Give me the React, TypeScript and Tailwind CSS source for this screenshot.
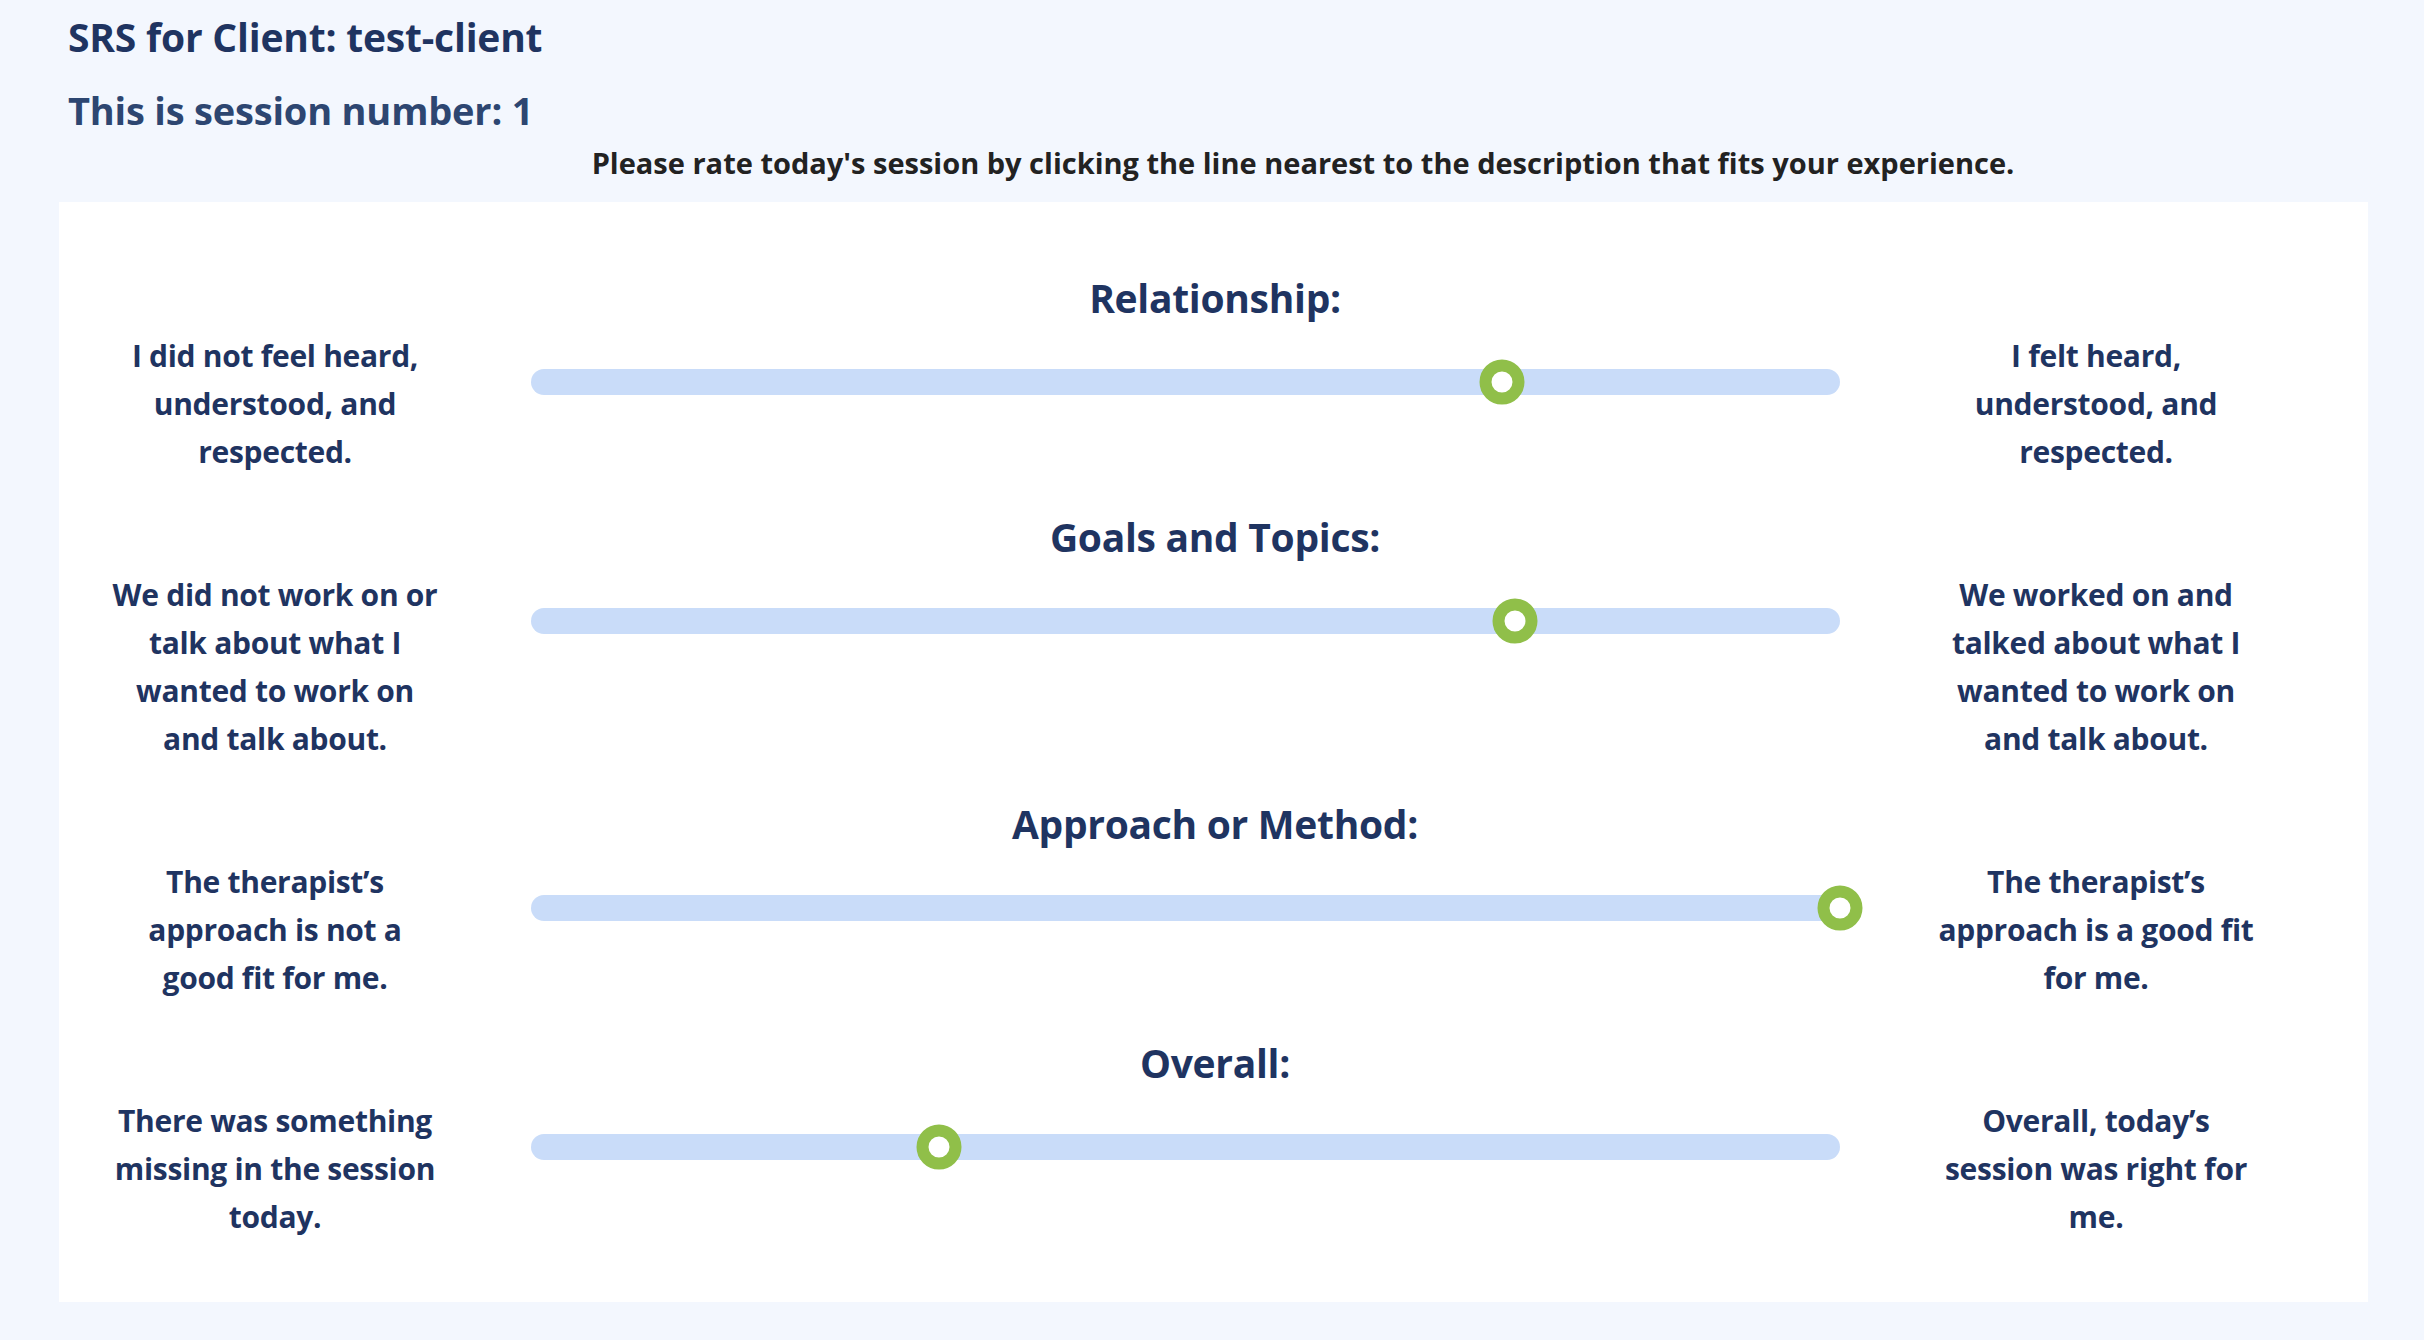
const sections = [
  {
    title: "Relationship:",
    left: ["I did not feel heard,", "understood, and", "respected."],
    right: ["I felt heard,", "understood, and", "respected."],
    value: 7.42,
  },
  {
    title: "Goals and Topics:",
    left: ["We did not work on or", "talk about what I", "wanted to work on", "and talk about."],
    right: ["We worked on and", "talked about what I", "wanted to work on", "and talk about."],
    value: 7.52,
  },
  {
    title: "Approach or Method:",
    left: ["The therapist’s", "approach is not a", "good fit for me."],
    right: ["The therapist’s", "approach is a good fit", "for me."],
    value: 10,
  },
  {
    title: "Overall:",
    left: ["There was something", "missing in the session", "today."],
    right: ["Overall, today’s", "session was right for", "me."],
    value: 3.12,
  },
];

export default function App() {
  return (
    <div
      className="min-h-[1340px] w-full bg-[#f3f7fe] pt-[13px] text-[#1f3461]"
      style={{ fontFamily: "'Open Sans', Lato, sans-serif" }}
    >
      <h1 className="pl-[68px] text-[39px] font-bold leading-[48px] tracking-[-0.2px] text-[#1f3461]">
        SRS for Client: test-client
      </h1>
      <h2 className="mt-[25px] pl-[68px] text-[38px] font-bold leading-[48px] tracking-[-0.2px] text-[#2d4671]">
        This is session number: 1
      </h2>
      <p className="mt-[11px] pl-[182px] text-center text-[29px] font-bold leading-[36px] text-[#222222]">
        Please rate today's session by clicking the line nearest to the description that fits your experience.
      </p>

      <div className="ml-[59px] mr-[56px] mt-[21px] bg-white pb-[61px] pl-[51px] pt-[72px]">
        <div className="flex flex-col gap-[37px]">
          {sections.map((s) => (
            <RatingRow key={s.title} {...s} />
          ))}
        </div>
      </div>
    </div>
  );
}

type RatingRowProps = {
  title: string;
  left: string[];
  right: string[];
  value: number;
};

function RatingRow({ title, left, right, value }: RatingRowProps) {
  return (
    <div>
      <h3 className="pr-[48px] text-center text-[39px] font-bold leading-[48px] tracking-[-0.3px] text-[#1f3461]">
        {title}
      </h3>
      <div className="mt-[10px] grid grid-cols-[330px_1309px_330px] items-start gap-x-[91px]">
        <Description lines={left} />
        <div className="relative mt-[37px] h-[26px] rounded-full bg-[#c9dcf9]">
          <div
            className="absolute top-1/2 h-[45px] w-[45px] -translate-x-1/2 -translate-y-1/2 rounded-full border-[12px] border-[#90bf49] bg-white"
            style={{ left: `${(value / 10) * 100}%` }}
          />
        </div>
        <Description lines={right} />
      </div>
    </div>
  );
}

function Description({ lines }: { lines: string[] }) {
  return (
    <p className="whitespace-nowrap text-center text-[30px] font-bold leading-[48px] tracking-[-0.3px] text-[#1f3461]">
      {lines.map((line, i) => (
        <span key={i} className="block">
          {line}
        </span>
      ))}
    </p>
  );
}
